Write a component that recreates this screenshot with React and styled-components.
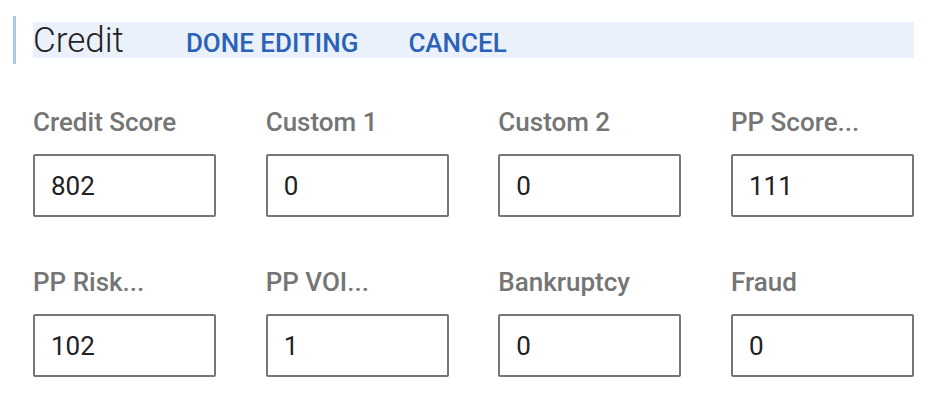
import React from "react";
import styled, { createGlobalStyle } from "styled-components";

const GlobalStyle = createGlobalStyle`
  body {
    margin: 0;
    background: #ffffff;
    font-family: Roboto, "Liberation Sans", sans-serif;
  }
`;

const Section = styled.section`
  width: 938px;
  height: 412px;
  box-sizing: border-box;
  padding: 16px 24px 0 13px;
`;

const HeaderWrap = styled.div`
  border-left: 3px solid #a9c9ec;
  padding: 6px 0 6px 17px;
`;

const HeaderBar = styled.div`
  display: flex;
  align-items: baseline;
  box-sizing: border-box;
  height: 36px;
  padding-top: 2px;
  background: #eaf1fa;
`;

const Title = styled.h2`
  margin: 0 62px 0 0;
  font-size: 35px;
  line-height: 34px;
  font-weight: 300;
  color: #212121;
`;

const TextButton = styled.button`
  border: none;
  background: none;
  padding: 0;
  margin-right: 50px;
  font-family: Roboto, "Liberation Sans", sans-serif;
  font-size: 26px;
  line-height: 30px;
  font-weight: 500;
  color: #2a62b8;
  text-transform: uppercase;
  cursor: pointer;
`;

const FieldGrid = styled.div`
  display: grid;
  grid-template-columns: repeat(4, 183px);
  justify-content: space-between;
  row-gap: 50px;
  margin: 43px 0 0 20px;
`;

const Field = styled.label`
  display: flex;
  flex-direction: column;
`;

const FieldLabel = styled.span`
  font-size: 26px;
  line-height: 30px;
  font-weight: 500;
  color: #757575;
  margin-bottom: 17px;
  white-space: nowrap;
`;

const Input = styled.input`
  box-sizing: border-box;
  width: 183px;
  height: 63px;
  border: 2px solid #767676;
  border-radius: 2px;
  padding: 0 16px;
  font-family: Roboto, "Liberation Sans", sans-serif;
  font-size: 26px;
  color: #212121;
  background: #ffffff;
  outline: none;
`;

const fields = [
  { label: "Credit Score", value: "802" },
  { label: "Custom 1", value: "0" },
  { label: "Custom 2", value: "0" },
  { label: "PP Score...", value: "111" },
  { label: "PP Risk...", value: "102" },
  { label: "PP VOI...", value: "1" },
  { label: "Bankruptcy", value: "0" },
  { label: "Fraud", value: "0" },
];

const App = () => {
  return (
    <>
      <GlobalStyle />
      <Section>
        <HeaderWrap>
          <HeaderBar>
            <Title>Credit</Title>
            <TextButton>Done Editing</TextButton>
            <TextButton>Cancel</TextButton>
          </HeaderBar>
        </HeaderWrap>
        <FieldGrid>
          {fields.map((field) => (
            <Field key={field.label}>
              <FieldLabel>{field.label}</FieldLabel>
              <Input defaultValue={field.value} />
            </Field>
          ))}
        </FieldGrid>
      </Section>
    </>
  );
};

export default App;
